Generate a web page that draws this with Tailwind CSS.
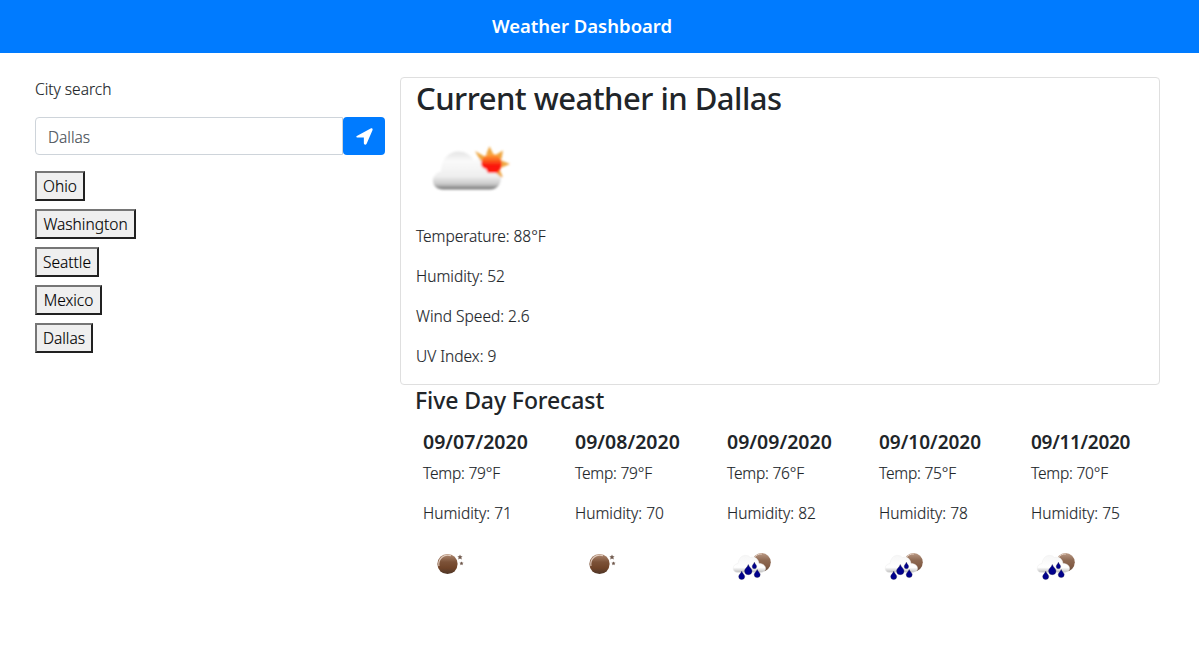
<!DOCTYPE html>
<html lang="en">
<head>
<meta charset="utf-8">
<title>Weather Dashboard</title>
<script src="https://cdn.jsdelivr.net/npm/@tailwindcss/browser@4"></script>
</head>
<body class="min-h-screen overflow-hidden bg-white font-['Noto_Sans','Open_Sans',sans-serif] text-[15.5px] font-light leading-6 text-[#212529] [-webkit-text-stroke:0.15px]">
<svg class="absolute h-0 w-0" aria-hidden="true">
  <defs>
    <linearGradient id="cloud" x1="0" y1="0" x2="0" y2="1"><stop offset="0" stop-color="#e4e4e4"/><stop offset=".25" stop-color="#fafafa"/><stop offset=".65" stop-color="#efefef"/><stop offset=".86" stop-color="#c9c9c9"/><stop offset="1" stop-color="#707070"/></linearGradient>
    <linearGradient id="sun" x1="0" y1="0" x2="0" y2="1"><stop offset="0" stop-color="#ffa63a"/><stop offset=".35" stop-color="#fa5a1c"/><stop offset=".6" stop-color="#fb160c"/><stop offset="1" stop-color="#ff1c14"/></linearGradient>
    <linearGradient id="moonfill" x1="0" y1="0" x2="0" y2="1"><stop offset="0" stop-color="#b08b73"/><stop offset=".4" stop-color="#7c5238"/><stop offset=".7" stop-color="#704429"/><stop offset="1" stop-color="#4d3628"/></linearGradient>
    <linearGradient id="smallcloud" x1="0" y1="0" x2="0" y2="1"><stop offset="0" stop-color="#f6f6f6"/><stop offset=".7" stop-color="#fff"/><stop offset="1" stop-color="#bcbcbc"/></linearGradient>
    <filter id="soft"><feGaussianBlur stdDeviation=".8"/></filter>
    <symbol id="moon" viewBox="0 0 50 50">
      <circle cx="24.5" cy="22" r="10.1" fill="url(#moonfill)"/>
      <path d="M16 24a9 9 0 0 1 12-10.300" fill="none" stroke="#e0cbbd" stroke-width="1.200"/>
      <path d="M37 12.600l.8 1.600 1.800.1-1.300 1.200.5 1.900-1.800-1-1.800 1 .5-1.900-1.300-1.200 1.800-.1zM38.500 19.400l.6 1.200 1.400.2-1 1 .2 1.400-1.200-.7-1.200.7.2-1.400-1-1 1.400-.2z" fill="#715a4e"/>
    </symbol>
    <symbol id="rain" viewBox="0 0 50 50">
      <circle cx="34.500" cy="20.300" r="9.300" fill="url(#moonfill)" opacity=".87"/>
      <path d="M27 16a9 9 0 0 1 8-4" fill="none" stroke="#e0cbbd" stroke-width="1"/>
      <path d="M11 30.500c-7 0-6-8.500 0-9 1-8 8-10.500 12.500-6 4-1.500 8 1.500 8.500 6 8 0 9 9 1 9z" fill="url(#smallcloud)" stroke="#eee" stroke-width=".5"/>
      <path transform="translate(-2 2)" d="M23.300 20.500c1 3 3.700 4.200 3.700 6.500a3.700 3.700 0 0 1-7.400 0c0-2.300 2.700-3.500 3.700-6.500zM29.400 18.200c.6 2 2.200 2.800 2.200 4.300a2.200 2.200 0 0 1-4.400 0c0-1.500 1.600-2.300 2.200-4.300zM16.700 27.300c.8 2.500 3 3.300 3 5.200a3 3 0 0 1-6 0c0-1.900 2.200-2.700 3-5.200zM32.200 25.500c.8 2.500 3 3.300 3 5.100a3 3 0 0 1-6 0c0-1.800 2.200-2.600 3-5.100z" fill="#00008c" stroke="#1a1a45" stroke-width=".35"/>
    </symbol>
  </defs>
</svg>
<header class="flex h-[53px] items-center justify-center bg-[#007bff] pr-[35px] text-white">
  <h1 class="text-[18.5px] font-semibold leading-6 pb-px [-webkit-text-stroke:0]">Weather Dashboard</h1>
</header>
<main class="flex pt-6">
  <aside class="ml-[35px] w-[350px] shrink-0">
    <label for="city" class="mb-4 block">City search</label>
    <form class="mb-4 flex h-[38px]">
      <input id="city" value="Dallas" class="min-w-0 flex-1 rounded-l border border-[#ced4da] px-3 pt-0.5 text-[#495057] outline-none">
      <button type="button" aria-label="Search" class="flex w-[42px] items-center justify-center rounded bg-[#007bff]">
        <svg class="h-[17px] w-[17px]" viewBox="0 0 16 16" fill="#fff"><path d="M1.200 7.200 13.800.5C15.200 0 16 .8 15.500 2.200L10 14.800c-.7 1.500-2.600 1.100-2.600-.4V8.900H1.500C0 8.900-.2 7.900 1.200 7.200Z"/></svg>
      </button>
    </form>
    <div class="flex flex-col items-start gap-2 text-black">
      <button class="h-[30px] w-[50px] border-2 border-t-[#767676] border-l-[#767676] border-r-[#212121] border-b-[#212121] bg-[#efefef] leading-[26px]">Ohio</button>
      <button class="h-[30px] w-[101px] border-2 border-t-[#767676] border-l-[#767676] border-r-[#212121] border-b-[#212121] bg-[#efefef] leading-[26px]">Washington</button>
      <button class="h-[30px] w-[64px] border-2 border-t-[#767676] border-l-[#767676] border-r-[#212121] border-b-[#212121] bg-[#efefef] leading-[26px]">Seattle</button>
      <button class="h-[30px] w-[67px] border-2 border-t-[#767676] border-l-[#767676] border-r-[#212121] border-b-[#212121] bg-[#efefef] leading-[26px]">Mexico</button>
      <button class="h-[30px] w-[58px] border-2 border-t-[#767676] border-l-[#767676] border-r-[#212121] border-b-[#212121] bg-[#efefef] leading-[26px]">Dallas</button>
    </div>
  </aside>
  <div class="ml-[15px] w-[760px] shrink-0">
    <section class="h-[308px] rounded border border-[#dfdfdf] px-[15px]">
      <h2 class="mb-2 h-[38px] text-[31px] tracking-[-0.52px] font-medium leading-[40px] [-webkit-text-stroke:0]">Current weather in Dallas</h2>
      <svg class="block h-[100px] w-[110px]" viewBox="0 0 110 100">
        <g filter="url(#soft)">
          <path d="M27 65.500c-13 0-13-16-2-18 0-22 24-26 33-11 8-3 15 0 17 7 13-2 14 22-1 22z" fill="url(#cloud)"/>
          <path d="M71 30 73.500 24l3 6zM81 31l5-3-1 6zM86 37.500l6 2.500-6 2.500zM83 46l3 7-6-5zM68 33l-7-4 4 7z" fill="#efa640" stroke="#efa640" stroke-width="1.500"/>
          <path d="M66 36c3-7 14-8 18-2 3 5 2 11-3 15h-9l-2-4c-4-1-6-4-4-9z" fill="url(#sun)"/>
        </g>
      </svg>
      <div class="flex flex-col gap-4">
        <p class="tracking-[-0.05px]">Temperature: 88°F</p><p>Humidity: 52</p><p>Wind Speed: 2.6</p><p>UV Index: 9</p>
      </div>
    </section>
    <section class="pl-[15px]">
      <h3 class="mb-2 h-[29px] text-[23px] tracking-[-0.1px] font-medium leading-[31px] [-webkit-text-stroke:0]">Five Day Forecast</h3>
      <div class="flex">
        <article class="w-[152px] shrink-0 px-2 pt-2"><h4 class="mb-[7px] text-[19.5px] font-semibold leading-6 [-webkit-text-stroke:0]">09/07/2020</h4><p class="mb-4 tracking-[-0.2px]">Temp: 79°F</p><p class="mb-[17px]">Humidity: 71</p><svg class="h-[50px] w-[50px]"><use href="#moon"/></svg></article>
        <article class="w-[152px] shrink-0 px-2 pt-2"><h4 class="mb-[7px] text-[19.5px] font-semibold leading-6 [-webkit-text-stroke:0]">09/08/2020</h4><p class="mb-4 tracking-[-0.2px]">Temp: 79°F</p><p class="mb-[17px]">Humidity: 70</p><svg class="h-[50px] w-[50px]"><use href="#moon"/></svg></article>
        <article class="w-[152px] shrink-0 px-2 pt-2"><h4 class="mb-[7px] text-[19.5px] font-semibold leading-6 [-webkit-text-stroke:0]">09/09/2020</h4><p class="mb-4 tracking-[-0.2px]">Temp: 76°F</p><p class="mb-[17px]">Humidity: 82</p><svg class="h-[50px] w-[50px]"><use href="#rain"/></svg></article>
        <article class="w-[152px] shrink-0 px-2 pt-2"><h4 class="mb-[7px] text-[19px] font-semibold leading-6 [-webkit-text-stroke:0]">09/10/2020</h4><p class="mb-4 tracking-[-0.2px]">Temp: 75°F</p><p class="mb-[17px]">Humidity: 78</p><svg class="h-[50px] w-[50px]"><use href="#rain"/></svg></article>
        <article class="w-[152px] shrink-0 px-2 pt-2"><h4 class="mb-[7px] text-[19px] tracking-[-0.3px] font-semibold leading-6 [-webkit-text-stroke:0]">09/11/2020</h4><p class="mb-4 tracking-[-0.2px]">Temp: 70°F</p><p class="mb-[17px]">Humidity: 75</p><svg class="h-[50px] w-[50px]"><use href="#rain"/></svg></article>
      </div>
    </section>
  </div>
</main>
</body>
</html>
